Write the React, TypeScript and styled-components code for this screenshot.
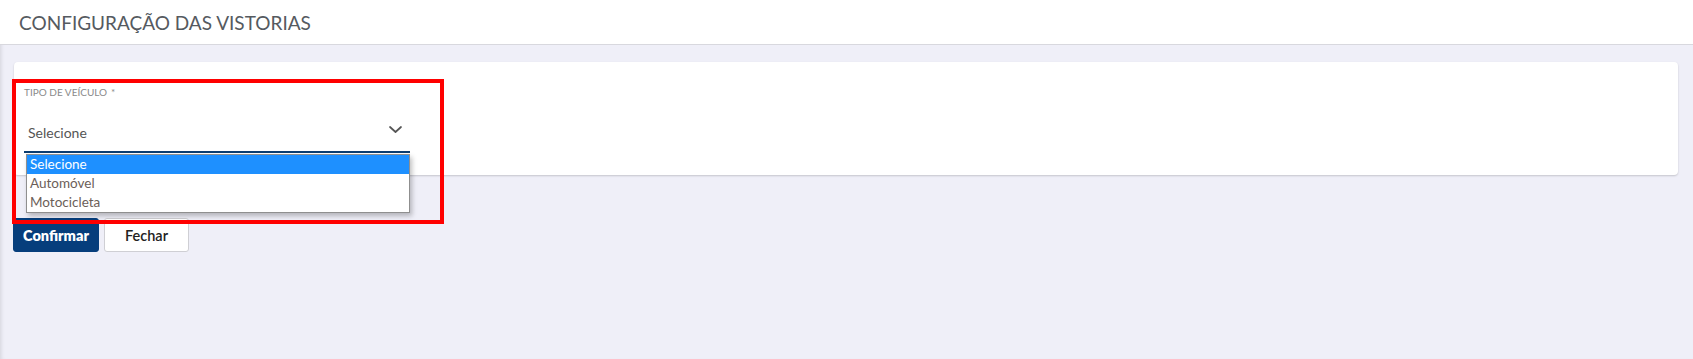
import React from "react";
import styled, { createGlobalStyle } from "styled-components";

const GlobalStyle = createGlobalStyle`
  html, body {
    margin: 0;
    padding: 0;
    background: #efeff8;
    font-family: "Lato", "Open Sans", sans-serif;
  }
`;

const Page = styled.div`
  position: relative;
  width: 1693px;
  height: 359px;
  background: #efeff8;
  box-shadow: inset 4px 0 4px -3px rgba(0, 0, 0, 0.12);
  overflow: hidden;
`;

const Header = styled.header`
  height: 45px;
  background: #fff;
  border-bottom: 1px solid #d8d8de;
  display: flex;
  align-items: center;
  padding-left: 19px;
  box-sizing: border-box;
`;

const Title = styled.h1`
  margin: 0;
  font-size: 19px;
  font-weight: 400;
  color: #555a60;
`;

const Content = styled.main`
  padding: 17px 15px 0 14px;
`;

const Card = styled.section`
  height: 113px;
  background: #fff;
  border-radius: 4px;
  box-shadow: 0 1px 2px rgba(0, 0, 0, 0.18);
  padding: 24px 10px 0 10px;
  box-sizing: border-box;
`;

const Field = styled.div`
  position: relative;
  width: 386px;
`;

const Label = styled.label`
  display: block;
  font-size: 10px;
  color: #8a8a8a;
  text-transform: uppercase;
  line-height: 12px;
`;

const Required = styled.span`
  margin-left: 4px;
`;

const SelectBox = styled.div`
  height: 38px;
  margin-top: 17px;
  display: flex;
  align-items: flex-start;
  justify-content: space-between;
  padding: 9px 8px 0 4px;
  box-sizing: border-box;
  border-bottom: 2px solid #0b3d70;
  font-size: 14px;
  color: #555;
`;

const Chevron = styled.svg`
  width: 13px;
  height: 7px;
  margin-top: 2px;
`;

const OptionList = styled.ul`
  position: absolute;
  left: 2px;
  right: 0;
  top: 68px;
  margin: 0;
  padding: 0;
  list-style: none;
  background: #fff;
  border: 1px solid #8f8f8f;
  box-shadow: 2px 3px 5px rgba(0, 0, 0, 0.25);
  z-index: 2;
`;

const Option = styled.li<{ $active?: boolean }>`
  height: 19px;
  line-height: 19px;
  padding-left: 3px;
  font-size: 13.5px;
  color: ${(p) => (p.$active ? "#fff" : "#6b5e58")};
  background: ${(p) => (p.$active ? "#1e90ff" : "transparent")};
`;

const Actions = styled.div`
  display: flex;
  gap: 5px;
  margin-top: 43px;
  margin-left: -1px;
`;

const Button = styled.button<{ $primary?: boolean }>`
  height: 34px;
  width: ${(p) => (p.$primary ? "86px" : "85px")};
  border-radius: 3px;
  font-family: inherit;
  font-size: 14.5px;
  font-weight: ${(p) => (p.$primary ? 800 : 600)};
  color: ${(p) => (p.$primary ? "#fff" : "#222")};
  background: ${(p) => (p.$primary ? "#063e7c" : "#fff")};
  border: 1px solid ${(p) => (p.$primary ? "#063e7c" : "#cfcfd4")};
  padding: 0;
  cursor: pointer;
`;

const Highlight = styled.div`
  position: absolute;
  left: 12px;
  top: 79px;
  width: 432px;
  height: 145px;
  border: 4px solid #ff0000;
  box-sizing: border-box;
  pointer-events: none;
  z-index: 3;
`;

export default function App() {
  return (
    <>
      <GlobalStyle />
      <Page>
        <Header>
          <Title>CONFIGURAÇÃO DAS VISTORIAS</Title>
        </Header>
        <Content>
          <Card>
            <Field>
              <Label>
                Tipo de veículo<Required>*</Required>
              </Label>
              <SelectBox>
                <span>Selecione</span>
                <Chevron viewBox="0 0 13 7" fill="none">
                  <path d="M1 1l5.5 5 5.5-5" stroke="#555" strokeWidth="1.7" strokeLinecap="round" strokeLinejoin="round" />
                </Chevron>
              </SelectBox>
              <OptionList>
                <Option $active>Selecione</Option>
                <Option>Automóvel</Option>
                <Option>Motocicleta</Option>
              </OptionList>
            </Field>
          </Card>
          <Actions>
            <Button $primary>Confirmar</Button>
            <Button>Fechar</Button>
          </Actions>
        </Content>
        <Highlight />
      </Page>
    </>
  );
}
